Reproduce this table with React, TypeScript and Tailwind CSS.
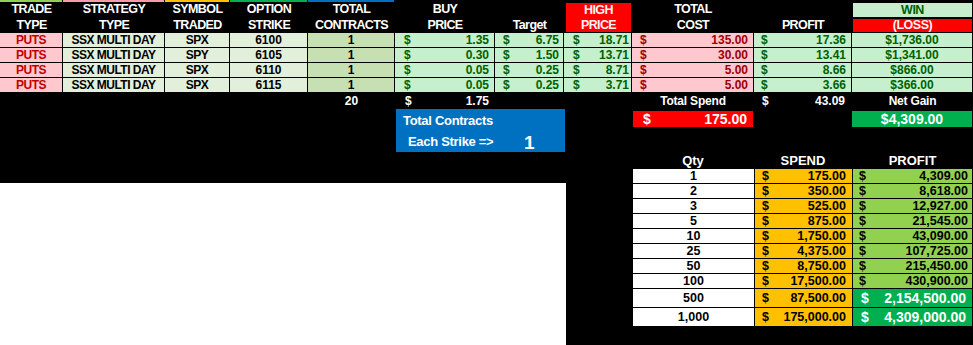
import React from "react";

type Row = {
  sym: string;
  strike: string;
  buy: string;
  target: string;
  high: string;
  cost: string;
  profit: string;
  win: string;
};

const rows: Row[] = [
  { sym: "SPX", strike: "6100", buy: "1.35", target: "6.75", high: "18.71", cost: "135.00", profit: "17.36", win: "$1,736.00" },
  { sym: "SPY", strike: "6105", buy: "0.30", target: "1.50", high: "13.71", cost: "30.00", profit: "13.41", win: "$1,341.00" },
  { sym: "SPX", strike: "6110", buy: "0.05", target: "0.25", high: "8.71", cost: "5.00", profit: "8.66", win: "$866.00" },
  { sym: "SPX", strike: "6115", buy: "0.05", target: "0.25", high: "3.71", cost: "5.00", profit: "3.66", win: "$366.00" },
];

const qtyRows = [
  { q: "1", s: "175.00", p: "4,309.00" },
  { q: "2", s: "350.00", p: "8,618.00" },
  { q: "3", s: "525.00", p: "12,927.00" },
  { q: "5", s: "875.00", p: "21,545.00" },
  { q: "10", s: "1,750.00", p: "43,090.00" },
  { q: "25", s: "4,375.00", p: "107,725.00" },
  { q: "50", s: "8,750.00", p: "215,450.00" },
  { q: "100", s: "17,500.00", p: "430,900.00" },
];

function HeadCell({ line, l1, l2 }: { line: string; l1: string; l2: string }) {
  return (
    <div className="flex h-[33px] flex-col">
      <div className={`mr-[1px] h-[2px] ${line}`} />
      <div className="flex flex-1 flex-col items-center justify-center text-[12.5px] leading-[15.5px] tracking-[-0.6px] text-white">
        <span>{l1}</span>
        <span>{l2}</span>
      </div>
    </div>
  );
}

function Money({ v, cls, pad }: { v: string; cls: string; pad: string }) {
  return (
    <div className={`flex items-center justify-between border-b border-r border-black ${pad} ${cls}`}>
      <span>$</span>
      <span>{v}</span>
    </div>
  );
}

export default function App() {
  return (
    <div className="h-[345px] w-[973px] overflow-hidden bg-black font-['Liberation_Sans',Arial,sans-serif] font-bold">
      {/* Top table */}
      <div className="grid grid-cols-[63px_102px_65px_78px_87px_100px_69px_68px_122px_98px_121px] text-[12px] leading-none">
        <HeadCell line="bg-[#92d050]" l1="TRADE" l2="TYPE" />
        <HeadCell line="bg-[#fb9aab]" l1="STRATEGY" l2="TYPE" />
        <HeadCell line="bg-[#ffc000]" l1="SYMBOL" l2="TRADED" />
        <HeadCell line="bg-[#00b050]" l1="OPTION" l2="STRIKE" />
        <HeadCell line="bg-[#0070c0]" l1="TOTAL" l2="CONTRACTS" />
        <HeadCell line="bg-black" l1="BUY" l2="PRICE" />
        <HeadCell line="bg-black" l1={"\u00a0"} l2="Target" />
        <div className="flex h-[33px] flex-col pb-[1px] pl-[2px] pr-[1px] pt-[3px]">
          <div className="flex flex-1 flex-col items-center justify-center bg-[#ff0000] text-[12.5px] leading-[14.5px] tracking-[-0.6px] text-[#fff2f2]">
            <span>HIGH</span>
            <span>PRICE</span>
          </div>
        </div>
        <HeadCell line="bg-black" l1="TOTAL" l2="COST" />
        <HeadCell line="bg-black" l1={"\u00a0"} l2="PROFIT" />
        <div className="flex h-[33px] flex-col pl-[1px] pr-[1px] pt-[3px] text-[12.5px]">
          <div className="flex h-[14px] items-center justify-center bg-[#c6efce] tracking-[-0.5px] text-[#006100]">WIN</div>
          <div className="mt-[2px] flex h-[13px] items-center justify-center bg-[#ff0000] tracking-[-0.5px] text-[#fff2f2]">(LOSS)</div>
        </div>

        {rows.map((r, i) => (
          <React.Fragment key={i}>
            <div className="flex h-[15px] items-center justify-center border-b border-r border-black bg-[#ffc7ce] tracking-[-0.5px] text-[#c00000]">PUTS</div>
            <div className="flex h-[15px] items-center justify-center border-b border-r border-black bg-[#e2efda] tracking-[-0.5px] text-black">SSX MULTI DAY</div>
            <div className="flex h-[15px] items-center justify-center border-b border-r border-black bg-[#e2efda] tracking-[-0.5px] text-black">{r.sym}</div>
            <div className="flex h-[15px] items-center justify-center border-b border-r border-black bg-[#e2efda] text-black">{r.strike}</div>
            <div className="flex h-[15px] items-center justify-center border-b border-r border-black bg-[#c6e0b4] text-black">1</div>
            <Money v={r.buy} cls="bg-[#c6efce] text-[#006100]" pad="pl-[9px] pr-[5px]" />
            <Money v={r.target} cls="bg-[#c6efce] text-[#006100]" pad="pl-[8px] pr-[4px]" />
            <Money v={r.high} cls="bg-[#c6efce] text-[#006100]" pad="pl-[9px] pr-[2px]" />
            <Money v={r.cost} cls="bg-[#ffc7ce] text-[#9c0006]" pad="pl-[8px] pr-[5px]" />
            <Money v={r.profit} cls="bg-[#c6efce] text-[#006100]" pad="pl-[7px] pr-[5px]" />
            <div className="flex h-[15px] items-center justify-center border-b border-r border-black bg-[#c6efce] text-[#006100]">{r.win}</div>
          </React.Fragment>
        ))}

        {/* footer row */}
        <div className="col-span-4 h-[15px]" />
        <div className="flex h-[15px] items-center justify-center text-white">20</div>
        <div className="flex h-[15px] items-center justify-between pl-[10px] pr-[6px] text-white">
          <span>$</span>
          <span>1.75</span>
        </div>
        <div className="col-span-2 h-[15px]" />
        <div className="flex h-[15px] items-center justify-center tracking-[-0.2px] text-white">Total Spend</div>
        <div className="flex h-[15px] items-center justify-between pl-[8px] pr-[7px] text-white">
          <span>$</span>
          <span>43.09</span>
        </div>
        <div className="flex h-[15px] items-center justify-center tracking-[-0.2px] text-white">Net Gain</div>
      </div>

      {/* Lower section */}
      <div className="flex h-[237px]">
        <div className="flex w-[632px] flex-col">
          <div className="h-[1px]" />
          <div className="ml-[396px] flex h-[43px] w-[169px] flex-col bg-[#0070c0] text-white">
            <div className="flex h-[23px] items-center pl-[7px] text-[13px] tracking-[-0.3px]">Total Contracts</div>
            <div className="flex h-[20px] items-center">
              <span className="w-[128px] pl-[12px] text-[13px] tracking-[-0.3px]">Each Strike =&gt;</span>
              <span className="text-[19px] leading-none">1</span>
            </div>
          </div>
          <div className="h-[31px]" />
          <div className="w-[566px] flex-1 bg-white" />
        </div>

        <div className="flex w-[341px] flex-col">
          <div className="h-[3px]" />
          <div className="flex h-[16px] text-[14px] text-white">
            <div className="ml-[1px] flex w-[120px] items-center justify-between bg-[#ff0000] pl-[10px] pr-[6px]">
              <span>$</span>
              <span>175.00</span>
            </div>
            <div className="w-[99px]" />
            <div className="flex w-[120px] items-center justify-center bg-[#00b050]">$4,309.00</div>
          </div>
          <div className="h-[24px]" />
          <div className="grid h-[18px] grid-cols-[122px_98px_121px] items-center text-[13px] text-white">
            <div className="text-center">Qty</div>
            <div className="text-center">SPEND</div>
            <div className="text-center">PROFIT</div>
          </div>
          {qtyRows.map((r) => (
            <div key={r.q} className="grid h-[15px] grid-cols-[122px_98px_121px] border-b border-black text-[12.5px] leading-none text-black">
              <div className="flex items-center justify-center border-l border-black bg-white">{r.q}</div>
              <div className="flex items-center justify-between border-l border-black bg-[#ffc000] pl-[7px] pr-[6px]">
                <span>$</span>
                <span>{r.s}</span>
              </div>
              <div className="flex items-center justify-between border-l border-r border-black bg-[#92d050] pl-[6px] pr-[4px]">
                <span>$</span>
                <span>{r.p}</span>
              </div>
            </div>
          ))}
          {[
            { q: "500", s: "87,500.00", p: "2,154,500.00" },
            { q: "1,000", s: "175,000.00", p: "4,309,000.00" },
          ].map((r) => (
            <div key={r.q} className="grid h-[19px] grid-cols-[122px_98px_121px] border-b border-black leading-none">
              <div className="flex items-center justify-center border-l border-black bg-white text-[12.5px] text-black">{r.q}</div>
              <div className="flex items-center justify-between border-l border-black bg-[#ffc000] pl-[7px] pr-[6px] text-[12.5px] text-black">
                <span>$</span>
                <span>{r.s}</span>
              </div>
              <div className="flex items-center justify-between border-l border-r border-black bg-[#00b050] pl-[8px] pr-[6px] text-[14px] text-white">
                <span>$</span>
                <span>{r.p}</span>
              </div>
            </div>
          ))}
        </div>
      </div>
    </div>
  );
}
